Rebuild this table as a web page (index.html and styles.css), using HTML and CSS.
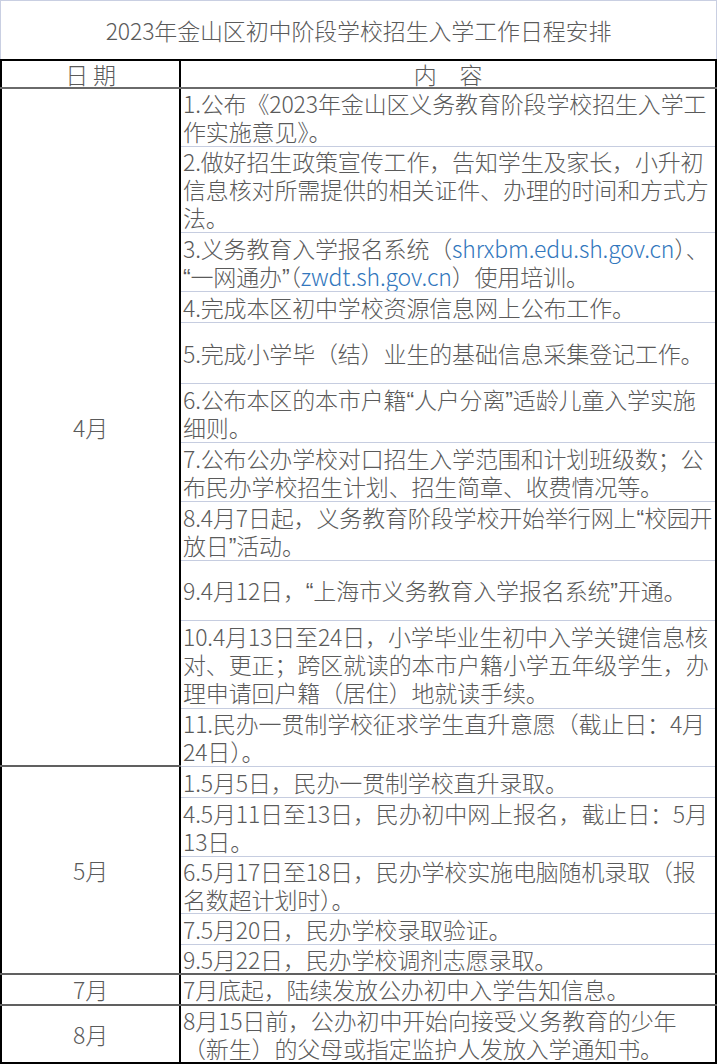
FILE: index.html
```html
<!DOCTYPE html>
<html lang="zh-CN">
<head>
<meta charset="utf-8">
<title>2023年金山区初中阶段学校招生入学工作日程安排</title>
<link rel="stylesheet" href="styles.css">
</head>
<body>
<div class="sheet">
  <div class="title">2023年金山区初中阶段学校招生入学工作日程安排</div>
  <table class="schedule">
    <colgroup><col class="c-date"><col class="c-content"></colgroup>
    <thead>
      <tr class="head"><th>日 期</th><th>内　容</th></tr>
    </thead>
    <tbody>
      <tr class="two-m"><td class="month" rowspan="11">4月</td><td class="item">1.公布《2023年金山区义务教育阶段学校招生入学工<br>作实施意见》。</td></tr>
      <tr class="three-s"><td class="item">2.做好招生政策宣传工作，告知学生及家长，小升初<br>信息核对所需提供的相关证件、办理的时间和方式方<br>法。</td></tr>
      <tr class="two"><td class="item">3.义务教育入学报名系统（<a class="link">shrxbm.edu.sh.gov.cn</a>）、<br><span class="q">“</span>一网通办<span class="q">”</span>（<a class="link">zwdt.sh.gov.cn</a>）使用培训。</td></tr>
      <tr class="one"><td class="item">4.完成本区初中学校资源信息网上公布工作。</td></tr>
      <tr class="two-l"><td class="item">5.完成小学毕（结）业生的基础信息采集登记工作。</td></tr>
      <tr class="two"><td class="item">6.公布本区的本市户籍<span class="q">“</span>人户分离<span class="q">”</span>适龄儿童入学实施<br>细则。</td></tr>
      <tr class="two"><td class="item">7.公布公办学校对口招生入学范围和计划班级数；公<br>布民办学校招生计划、招生简章、收费情况等。</td></tr>
      <tr class="two"><td class="item">8.4月7日起，义务教育阶段学校开始举行网上<span class="q">“</span>校园开<br>放日<span class="q">”</span>活动。</td></tr>
      <tr class="two-x"><td class="item">9.4月12日，<span class="q">“</span>上海市义务教育入学报名系统<span class="q">”</span>开通。</td></tr>
      <tr class="three"><td class="item">10.4月13日至24日，小学毕业生初中入学关键信息核<br>对、更正；跨区就读的本市户籍小学五年级学生，办<br>理申请回户籍（居住）地就读手续。</td></tr>
      <tr class="two-m"><td class="item">11.民办一贯制学校征求学生直升意愿（截止日：4月<br>24日）。</td></tr>

      <tr class="one"><td class="month" rowspan="5">5月</td><td class="item">1.5月5日，民办一贯制学校直升录取。</td></tr>
      <tr class="two"><td class="item">4.5月11日至13日，民办初中网上报名，截止日：5月<br>13日。</td></tr>
      <tr class="two-s"><td class="item">6.5月17日至18日，民办学校实施电脑随机录取（报<br>名数超计划时）。</td></tr>
      <tr class="one"><td class="item">7.5月20日，民办学校录取验证。</td></tr>
      <tr class="one-s"><td class="item end">9.5月22日，民办学校调剂志愿录取。</td></tr>

      <tr class="one"><td class="month">7月</td><td class="item end">7月底起，陆续发放公办初中入学告知信息。</td></tr>
      <tr class="two-m"><td class="month last">8月</td><td class="item last">8月15日前，公办初中开始向接受义务教育的少年<br>（新生）的父母或指定监护人发放入学通知书。</td></tr>
    </tbody>
  </table>
</div>
</body>
</html>
```

FILE: styles.css
```css
html, body {
  margin: 0;
  padding: 0;
  background: #ffffff;
}

body {
  color: #5a5a5a;
  font-family: "Noto Sans CJK SC", sans-serif;
  font-weight: 300;
  font-size: 23px;
  letter-spacing: -0.15px;
}

.sheet {
  width: 717px;
}

.title {
  height: 58px;
  width: 715px;
  border: 1px solid #c9cfe2;
  border-bottom: none;
  display: flex;
  align-items: center;
  justify-content: center;
  line-height: 1;
}

.schedule {
  width: 717px;
  border-collapse: collapse;
  table-layout: fixed;
}

.c-date {
  width: 179px;
}

.schedule th,
.schedule td {
  padding: 0 2px;
  line-height: 28px;
  vertical-align: middle;
  white-space: nowrap;
  overflow: hidden;
}

.schedule th {
  font-weight: 300;
  line-height: 26px;
  text-align: center;
  border-top: 2px solid #000;
  border-bottom: 2px solid #6a6a6a;
  border-left: 2px solid #000;
  border-right: 2px solid #000;
}

.head {
  height: 26px;
}

.month {
  text-align: center;
  border-left: 2px solid #000;
  border-right: 2px solid #000;
  border-bottom: 2px solid #606060;
}

.item {
  text-align: left;
  border-right: 2px solid #000;
  border-bottom: 1px solid #c6cde0;
}

.item.end {
  border-bottom: 2px solid #606060;
}

.month.last,
.item.last {
  border-bottom: 2px solid #000;
}

.q {
  font-family: "Liberation Sans", sans-serif;
  line-height: 0;
}

.link {
  color: #3277bd;
  text-decoration: none;
  line-height: 0;
}

.one { height: 31px; }
.one-s { height: 28px; }
.two { height: 59px; }
.two-m { height: 58px; }
.two-s { height: 56px; }
.two-x { height: 60px; }
.two-l { height: 61px; }
.three-s { height: 86px; }
.three { height: 88px; }
```
